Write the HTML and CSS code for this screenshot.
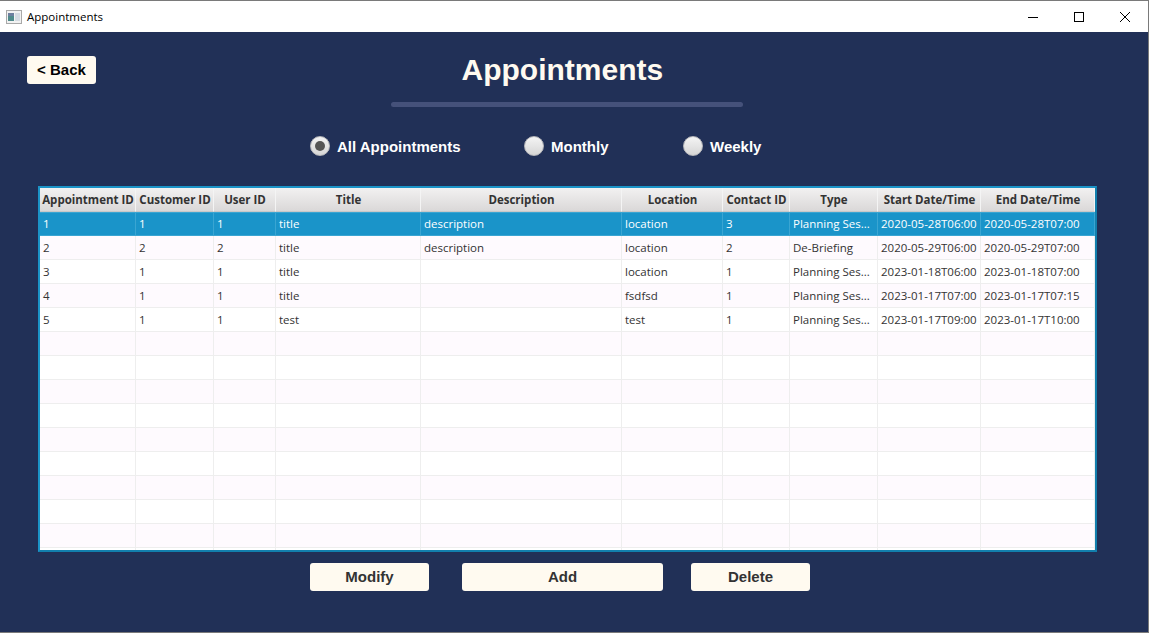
FILE: index.html
```html
<!doctype html>
<html>
<head>
<meta charset="UTF-8">
<title>Appointments</title>
	<link rel="stylesheet" href="styles.css">
</head>

<body>
<div class="window">
	<div class="titlebar">
		<svg class="appicon" width="16" height="14" viewBox="0 0 16 14">
			<rect x="0.5" y="0.5" width="15" height="13" fill="#f2f2f2" stroke="#a9a9a9"/>
			<rect x="2" y="3" width="6" height="8" fill="#4f8a8b"/>
			<rect x="2" y="3" width="6" height="3" fill="#6d7f9f"/>
			<rect x="9" y="3" width="5" height="8" fill="#d5dbe2"/>
		</svg>
		<span class="wintitle">Appointments</span>
		<div class="winbtns">
			<svg width="12" height="12" viewBox="0 0 12 12"><path d="M1 6.5H11" stroke="#000" fill="none"/></svg>
			<svg width="12" height="12" viewBox="0 0 12 12"><rect x="1.5" y="1.5" width="9" height="9" stroke="#000" fill="none"/></svg>
			<svg width="12" height="12" viewBox="0 0 12 12"><path d="M1 1L11 11M11 1L1 11" stroke="#000" fill="none"/></svg>
		</div>
	</div>

	<div class="content">
		<div class="header">
			<button class="btn back">&lt; Back</button>
			<h1>Appointments</h1>
		</div>
		<div class="divider"></div>

		<div class="radios">
			<label class="radio r-all"><span class="dot selected"></span>All Appointments</label>
			<label class="radio r-month"><span class="dot"></span>Monthly</label>
			<label class="radio"><span class="dot"></span>Weekly</label>
		</div>

		<div class="tablewrap">
			<table>
				<colgroup>
					<col class="c1"><col class="c2"><col class="c3"><col class="c4"><col class="c5">
					<col class="c6"><col class="c7"><col class="c8"><col class="c9"><col class="c10">
				</colgroup>
				<thead>
					<tr>
						<th>Appointment ID</th><th>Customer ID</th><th>User ID</th><th>Title</th><th>Description</th>
						<th>Location</th><th>Contact ID</th><th>Type</th><th>Start Date/Time</th><th>End Date/Time</th>
					</tr>
				</thead>
				<tbody>
					<tr class="sel"><td>1</td><td>1</td><td>1</td><td>title</td><td>description</td><td>location</td><td>3</td><td>Planning Ses...</td><td>2020-05-28T06:00</td><td>2020-05-28T07:00</td></tr>
					<tr><td>2</td><td>2</td><td>2</td><td>title</td><td>description</td><td>location</td><td>2</td><td>De-Briefing</td><td>2020-05-29T06:00</td><td>2020-05-29T07:00</td></tr>
					<tr><td>3</td><td>1</td><td>1</td><td>title</td><td></td><td>location</td><td>1</td><td>Planning Ses...</td><td>2023-01-18T06:00</td><td>2023-01-18T07:00</td></tr>
					<tr><td>4</td><td>1</td><td>1</td><td>title</td><td></td><td>fsdfsd</td><td>1</td><td>Planning Ses...</td><td>2023-01-17T07:00</td><td>2023-01-17T07:15</td></tr>
					<tr><td>5</td><td>1</td><td>1</td><td>test</td><td></td><td>test</td><td>1</td><td>Planning Ses...</td><td>2023-01-17T09:00</td><td>2023-01-17T10:00</td></tr>
					<tr><td></td><td></td><td></td><td></td><td></td><td></td><td></td><td></td><td></td><td></td></tr>
					<tr><td></td><td></td><td></td><td></td><td></td><td></td><td></td><td></td><td></td><td></td></tr>
					<tr><td></td><td></td><td></td><td></td><td></td><td></td><td></td><td></td><td></td><td></td></tr>
					<tr><td></td><td></td><td></td><td></td><td></td><td></td><td></td><td></td><td></td><td></td></tr>
					<tr><td></td><td></td><td></td><td></td><td></td><td></td><td></td><td></td><td></td><td></td></tr>
					<tr><td></td><td></td><td></td><td></td><td></td><td></td><td></td><td></td><td></td><td></td></tr>
					<tr><td></td><td></td><td></td><td></td><td></td><td></td><td></td><td></td><td></td><td></td></tr>
					<tr><td></td><td></td><td></td><td></td><td></td><td></td><td></td><td></td><td></td><td></td></tr>
					<tr><td></td><td></td><td></td><td></td><td></td><td></td><td></td><td></td><td></td><td></td></tr>
					<tr><td></td><td></td><td></td><td></td><td></td><td></td><td></td><td></td><td></td><td></td></tr>
				</tbody>
			</table>
		</div>

		<div class="actions">
			<button class="btn action">Modify</button>
			<button class="btn action add">Add</button>
			<button class="btn action">Delete</button>
		</div>
	</div>
</div>
</body>
</html>
```

FILE: styles.css
```css
html, body {
	margin: 0;
	height: 100%;
	overflow: hidden;
}

.window {
	box-sizing: border-box;
	height: 633px;
	display: flex;
	flex-direction: column;
	border: 1px solid #7a7a7a;
	border-left-width: 0;
	background-color: #FFFFFF;
}

.titlebar {
	height: 31px;
	flex: none;
	display: flex;
	align-items: center;
	padding-left: 6px;
	font-family: "Open Sans", "Noto Sans", sans-serif;
	font-size: 11.5px;
	color: #000000;
}

.appicon {
	margin-right: 5px;
}

.wintitle {
	flex: 1;
}

.winbtns {
	display: flex;
	gap: 34px;
	margin-right: 17px;
}

.content {
	flex: 1;
	background-color: #213057;
	font-family: "Liberation Sans", Arial, sans-serif;
}

.header {
	display: flex;
	align-items: flex-start;
	padding: 24px 0 0 27px;
}

h1 {
	margin: 0 0 0 365.5px;
	color: #FFFAF0;
	font-size: 30px;
	line-height: 28px;
	font-weight: bold;
}

.divider {
	width: 352px;
	height: 5px;
	margin: 18px 0 0 391px;
	background-color: #45517A;
	border-radius: 3px;
}

.radios {
	display: flex;
	align-items: center;
	margin: 29px 0 0 310px;
	height: 20px;
}

.radio {
	display: flex;
	align-items: center;
	color: #FFFFFF;
	font-size: 15px;
	font-weight: bold;
}

.r-all {
	width: 214px;
}

.r-month {
	width: 159px;
}

.dot {
	box-sizing: border-box;
	width: 20px;
	height: 20px;
	margin-right: 7px;
	border-radius: 50%;
	background: linear-gradient(#F4F4F4, #D6D6D6);
	border: 1px solid #B9B9BC;
	display: flex;
	align-items: center;
	justify-content: center;
}

.dot.selected::after {
	content: "";
	width: 10px;
	height: 10px;
	border-radius: 50%;
	background-color: #555555;
}

.tablewrap {
	width: 1055px;
	margin: 30px 0 0 38px;
	border: 2px solid #1B93C7;
	border-right-color: #127FAD;
	border-bottom-color: #127FAD;
	background-color: #FEFAFE;
	height: 362px;
	overflow: hidden;
}

table {
	border-collapse: separate;
	border-spacing: 0;
	table-layout: fixed;
	width: 1055px;
	font-family: "Open Sans", "Noto Sans", sans-serif;
	font-size: 11.5px;
}

.c1 { width: 96px; }
.c2 { width: 78px; }
.c3 { width: 62px; }
.c4 { width: 145px; }
.c5 { width: 201px; }
.c6 { width: 101px; }
.c7 { width: 67px; }
.c8 { width: 88px; }
.c9 { width: 103px; }
.c10 { width: 114px; }

th {
	box-sizing: border-box;
	height: 24px;
	padding: 0 0 0 1px;
	background: linear-gradient(#F2F1F1, #DAD8D8);
	border-right: 1px solid #F4F4F4;
	border-bottom: 1px solid #C8C8C8;
	color: #333333;
	font-weight: bold;
	white-space: nowrap;
	overflow: hidden;
}

td {
	box-sizing: border-box;
	height: 24px;
	padding: 0 0 0 3px;
	background-color: #FFFFFF;
	border-right: 1px solid #EEEEEE;
	border-bottom: 1px solid #EEEEEE;
	color: #333333;
	white-space: nowrap;
	overflow: hidden;
}

tbody tr:nth-child(even) td {
	background-color: #FEFAFE;
}

tbody tr.sel td {
	background-color: #1A94C9;
	border-color: #3AA5D2;
	box-shadow: inset 0 1px 0 #3AA5D2;
	color: #FFFFFF;
}

.actions {
	display: flex;
	margin: 11px 0 0 310px;
}

.btn {
	box-sizing: border-box;
	height: 28px;
	padding: 0 0 2px;
	border: none;
	border-radius: 3px;
	background-color: #FFFAF0;
	font-family: "Liberation Sans", Arial, sans-serif;
	font-size: 15px;
	font-weight: bold;
	color: #333333;
}

.back {
	width: 69px;
	flex: none;
	color: #000000;
}

.action {
	width: 119px;
	margin-right: 33px;
}

.add {
	width: 201px;
	margin-right: 28px;
}
```
